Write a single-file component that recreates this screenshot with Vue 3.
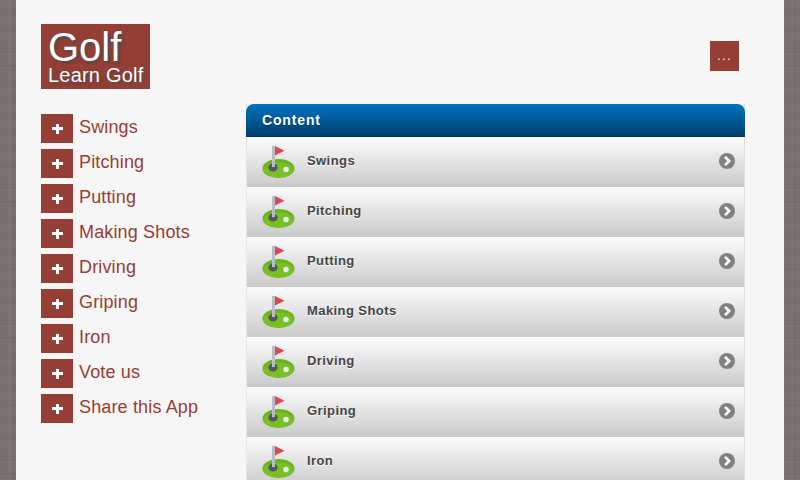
<script setup>
const items = [
  "Swings",
  "Pitching",
  "Putting",
  "Making Shots",
  "Driving",
  "Griping",
  "Iron"
];

const menu = [...items, "Vote us", "Share this App"];
</script>

<template>
  <div class="page">
    <div class="wrap">
      <header class="top">
        <div class="logo">
          <div class="logo-big">Golf</div>
          <div class="logo-small">Learn Golf</div>
        </div>
        <button class="more">...</button>
      </header>

      <div class="main">
        <nav class="side">
          <a v-for="m in menu" :key="m" class="side-item">
            <span class="plus"><i></i></span>
            <span class="side-text">{{ m }}</span>
          </a>
        </nav>

        <section class="panel">
          <div class="panel-head">Content</div>
          <div v-for="item in items" :key="item" class="row">
            <svg class="flag" width="34" height="34" viewBox="0 0 34 34">
              <ellipse cx="16.5" cy="23.5" rx="16" ry="9.5" fill="#6cb41e" />
              <ellipse cx="16.5" cy="25" rx="15" ry="7.5" fill="#79c024" />
              <circle cx="24" cy="24.5" r="2.8" fill="#e6eaf2" />
              <ellipse cx="11" cy="22.5" rx="4.6" ry="4" fill="#55565f" />
              <rect x="10" y="1" width="3" height="21" fill="#b9bccb" />
              <path d="M13 1 L22.5 5.8 L13 10.5 Z" fill="#e0474c" />
            </svg>
            <span class="row-text">{{ item }}</span>
            <svg class="arrow" width="16" height="16" viewBox="0 0 16 16">
              <circle cx="8" cy="8" r="8" fill="#808080" />
              <path d="M6 3.8 L10.2 8 L6 12.2" fill="none" stroke="#fff" stroke-width="2.6" />
            </svg>
          </div>
        </section>
      </div>
    </div>
  </div>
</template>

<style>
html, body {
  margin: 0;
  height: 480px;
  overflow: hidden;
}
</style>

<style scoped>
.page {
  width: 800px;
  height: 480px;
  overflow: hidden;
  background-color: #787270;
  background-image:
    repeating-linear-gradient(90deg, rgba(255,255,255,.035) 0 1px, transparent 1px 4px, rgba(0,0,0,.04) 4px 5px, transparent 5px 9px),
    repeating-linear-gradient(90deg, rgba(0,0,0,.04) 0 2px, transparent 2px 13px),
    repeating-linear-gradient(0deg, rgba(255,255,255,.03) 0 1px, transparent 1px 6px, rgba(0,0,0,.04) 6px 7px, transparent 7px 17px);
  font-family: "Liberation Sans", Arial, sans-serif;
}

.wrap {
  width: 768px;
  height: 480px;
  margin: 0 auto;
  background: #f6f6f6;
  box-sizing: border-box;
  padding: 24px 39px 0 25px;
}

.top {
  display: flex;
  justify-content: space-between;
  align-items: flex-start;
  height: 80px;
}

.logo {
  width: 109px;
  height: 65px;
  background: #943e35;
  color: #fff;
  box-sizing: border-box;
  padding: 4px 0 0 7px;
  text-shadow: 2px 2px 3px #4a4a4a;
}

.logo-big {
  font-size: 40px;
  line-height: 39px;
}

.logo-small {
  font-size: 20px;
  line-height: 16px;
  letter-spacing: 0.2px;
}

.more {
  margin: 17px 6px 0 0;
  width: 29px;
  height: 30px;
  border: 0;
  padding: 0;
  background: #943e35;
  color: #fff;
  font-family: "Liberation Sans", Arial, sans-serif;
  font-size: 13px;
  letter-spacing: 1.4px;
  line-height: 30px;
}

.main {
  display: flex;
  align-items: flex-start;
}

.side {
  width: 205px;
  padding-top: 10px;
  display: flex;
  flex-direction: column;
  gap: 6px;
}

.side-item {
  display: flex;
  align-items: flex-start;
  height: 29px;
}

.plus {
  width: 32px;
  height: 29px;
  background: #943e35;
  display: flex;
  align-items: center;
  justify-content: center;
  margin-right: 6px;
}

.plus i {
  display: block;
  width: 11px;
  height: 10px;
  background:
    linear-gradient(#fff, #fff) center / 11px 3px no-repeat,
    linear-gradient(#fff, #fff) center / 3px 10px no-repeat;
}

.side-text {
  color: #943e35;
  font-size: 18px;
  letter-spacing: 0.15px;
  line-height: 26px;
}

.panel {
  width: 499px;
  box-sizing: border-box;
  border-right: 1px solid #ddd;
  border-left: 1px solid #e6e6e6;
}

.panel-head {
  height: 32px;
  border-radius: 8px 8px 0 0;
  background: linear-gradient(#0074be, #003f6e);
  border-bottom: 1px solid #00365c;
  color: #fff;
  font-size: 14px;
  font-weight: bold;
  letter-spacing: 0.85px;
  line-height: 33px;
  padding-left: 16px;
  text-shadow: 0 1px 1px #003050;
  margin: 0 -1px;
}

.row {
  height: 50px;
  display: flex;
  align-items: center;
  background: linear-gradient(#fcfcfc, #c9c9c9);
  padding: 0 9px 0 15px;
  box-sizing: border-box;
}

.flag {
  margin: 0 11px 0 0;
}

.row-text {
  flex: 1;
  color: #444;
  font-size: 13px;
  font-weight: bold;
  letter-spacing: 0.42px;
  text-shadow: 0 1px 0 #fff;
  margin-top: -3px;
}

.arrow {
  margin-top: -2px;
}
</style>
